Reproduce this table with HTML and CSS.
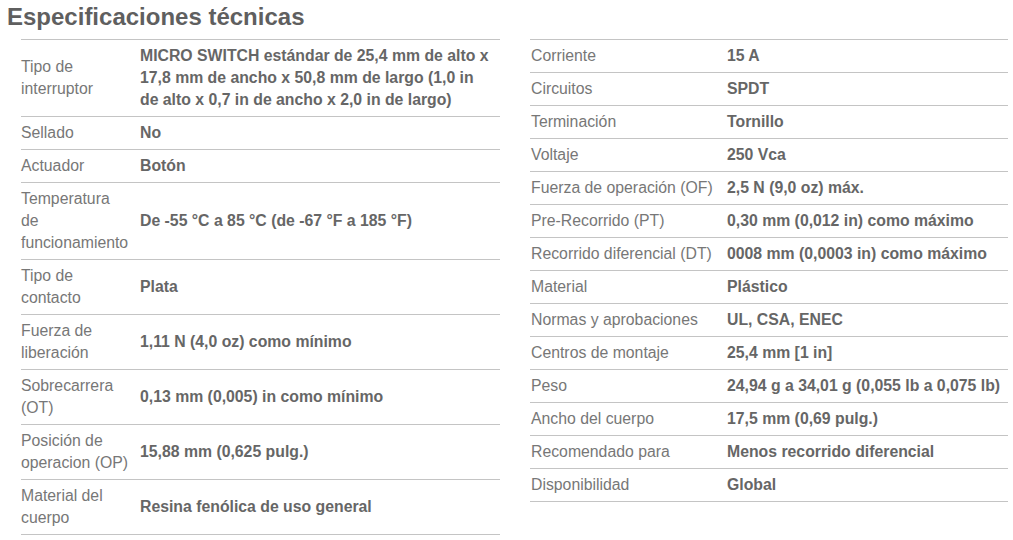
FILE: index.html
```html
<!DOCTYPE html>
<html lang="es">
<head>
    <meta charset="UTF-8">
    <meta name="viewport" content="width=device-width, initial-scale=1.0">
    <title>Especificaciones técnicas</title>
    <link rel="stylesheet" href="styles.css">
</head>
<body>

<div class="specs">
    <h2>Especificaciones técnicas</h2>

    <div class="spec-columns">
        <table class="spec-table spec-left">
            <tr>
                <td class="label">Tipo de interruptor</td>
                <td class="value">MICRO SWITCH estándar de 25,4 mm de alto x 17,8 mm de ancho x 50,8 mm de largo (1,0 in de alto x 0,7 in de ancho x 2,0 in de largo)</td>
            </tr>
            <tr>
                <td class="label">Sellado</td>
                <td class="value">No</td>
            </tr>
            <tr>
                <td class="label">Actuador</td>
                <td class="value">Botón</td>
            </tr>
            <tr>
                <td class="label">Temperatura de funcionamiento</td>
                <td class="value">De -55 °C a 85 °C (de -67 °F a 185 °F)</td>
            </tr>
            <tr>
                <td class="label">Tipo de contacto</td>
                <td class="value">Plata</td>
            </tr>
            <tr>
                <td class="label">Fuerza de liberación</td>
                <td class="value">1,11 N (4,0 oz) como mínimo</td>
            </tr>
            <tr>
                <td class="label">Sobrecarrera (OT)</td>
                <td class="value">0,13 mm (0,005) in como mínimo</td>
            </tr>
            <tr>
                <td class="label">Posición de operacion (OP)</td>
                <td class="value">15,88 mm (0,625 pulg.)</td>
            </tr>
            <tr>
                <td class="label">Material del cuerpo</td>
                <td class="value">Resina fenólica de uso general</td>
            </tr>
        </table>

        <table class="spec-table spec-right">
            <tr>
                <td class="label">Corriente</td>
                <td class="value">15 A</td>
            </tr>
            <tr>
                <td class="label">Circuitos</td>
                <td class="value">SPDT</td>
            </tr>
            <tr>
                <td class="label">Terminación</td>
                <td class="value">Tornillo</td>
            </tr>
            <tr>
                <td class="label">Voltaje</td>
                <td class="value">250 Vca</td>
            </tr>
            <tr>
                <td class="label">Fuerza de operación (OF)</td>
                <td class="value">2,5 N (9,0 oz) máx.</td>
            </tr>
            <tr>
                <td class="label">Pre-Recorrido (PT)</td>
                <td class="value">0,30 mm (0,012 in) como máximo</td>
            </tr>
            <tr>
                <td class="label">Recorrido diferencial (DT)</td>
                <td class="value">0008 mm (0,0003 in) como máximo</td>
            </tr>
            <tr>
                <td class="label">Material</td>
                <td class="value">Plástico</td>
            </tr>
            <tr>
                <td class="label">Normas y aprobaciones</td>
                <td class="value">UL, CSA, ENEC</td>
            </tr>
            <tr>
                <td class="label">Centros de montaje</td>
                <td class="value">25,4 mm [1 in]</td>
            </tr>
            <tr>
                <td class="label">Peso</td>
                <td class="value">24,94 g a 34,01 g (0,055 lb a 0,075 lb)</td>
            </tr>
            <tr>
                <td class="label">Ancho del cuerpo</td>
                <td class="value">17,5 mm (0,69 pulg.)</td>
            </tr>
            <tr>
                <td class="label">Recomendado para</td>
                <td class="value">Menos recorrido diferencial</td>
            </tr>
            <tr>
                <td class="label">Disponibilidad</td>
                <td class="value">Global</td>
            </tr>
        </table>
    </div>
</div>

</body>
</html>
```

FILE: styles.css
```css
* {
    margin: 0;
    padding: 0;
    box-sizing: border-box;
}

body {
    font-family: "Liberation Sans", Arial, sans-serif;
    background-color: #fff;
    color: #666;
}

.specs {
    padding: 3px 5px 0 7px;
}

.specs h2 {
    font-size: 24px;
    line-height: 28px;
    font-weight: bold;
    color: #5f5f5f;
    margin-bottom: 8px;
}

.spec-columns {
    display: flex;
    align-items: flex-start;
    gap: 30px;
    padding-left: 14px;
}

.spec-table {
    border-collapse: collapse;
    font-size: 15.8px;
    line-height: 22px;
}

.spec-table tr {
    border-top: 1px solid #c4c4c4;
    border-bottom: 1px solid #c4c4c4;
}

.spec-table td {
    padding: 5px 0;
    vertical-align: middle;
}

.spec-table .label {
    color: #777;
}

.spec-table .value {
    font-weight: bold;
    color: #666;
}

.spec-left {
    width: 479px;
}

.spec-left .label {
    width: 119px;
    padding-right: 9px;
}

.spec-left .value {
    padding-right: 6px;
}

.spec-right {
    width: 478px;
}

.spec-right .label {
    width: 197px;
    padding-left: 1px;
}
```
